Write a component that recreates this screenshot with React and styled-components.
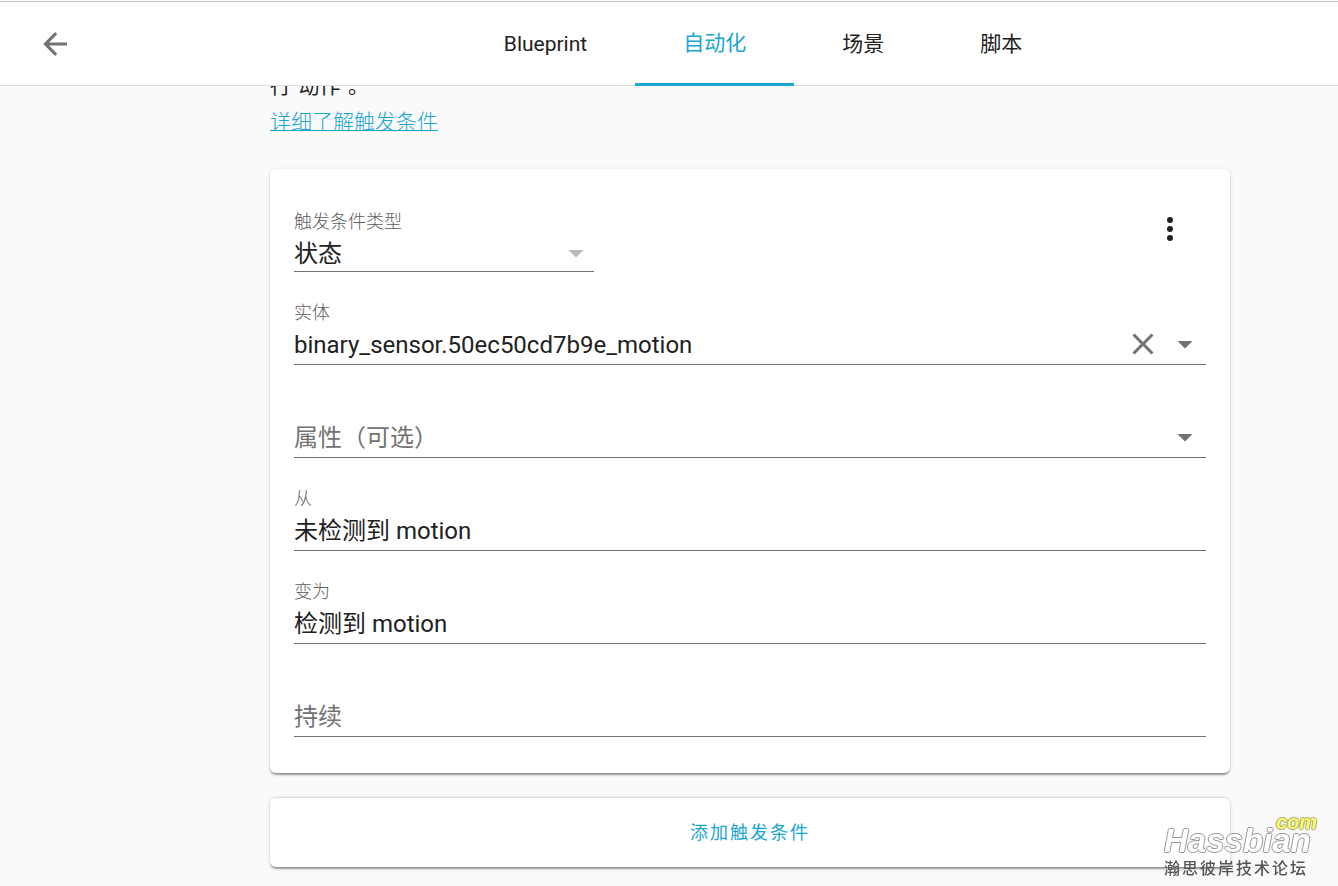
import { useState } from 'react';
import styled, { createGlobalStyle } from 'styled-components';

const ARROW_LEFT = 'M20,11V13H8L13.5,18.5L12.08,19.92L4.16,12L12.08,4.08L13.5,5.5L8,11H20Z';
const CLOSE =
	'M19,6.41L17.59,5L12,10.59L6.41,5L5,6.41L10.59,12L5,17.59L6.41,19L12,13.41L17.59,19L19,17.59L13.41,12L19,6.41Z';
const MENU_DOWN = 'M7,10L12,15L17,10H7Z';
const DOTS =
	'M12,16A2,2 0 0,1 14,18A2,2 0 0,1 12,20A2,2 0 0,1 10,18A2,2 0 0,1 12,16M12,10A2,2 0 0,1 14,12A2,2 0 0,1 12,14A2,2 0 0,1 10,12A2,2 0 0,1 12,10M12,4A2,2 0 0,1 14,6A2,2 0 0,1 12,8A2,2 0 0,1 10,6A2,2 0 0,1 12,4Z';

const tabs = ['Blueprint', '自动化', '场景', '脚本'];

function Icon({ path }) {
	return (
		<Svg viewBox="0 0 24 24" aria-hidden="true">
			<path d={path} />
		</Svg>
	);
}

function TextField({ id, label, value, onChange, placeholder, children }) {
	return (
		<Field>
			<Label htmlFor={id}>{label}</Label>
			<Row>
				<Input
					id={id}
					value={value}
					placeholder={placeholder}
					aria-label={placeholder}
					onChange={(e) => onChange(e.target.value)}
				/>
				{children}
			</Row>
		</Field>
	);
}

export default function App() {
	const [active, setActive] = useState('自动化');
	const [entity, setEntity] = useState('binary_sensor.50ec50cd7b9e_motion');
	const [attribute, setAttribute] = useState('');
	const [from, setFrom] = useState('未检测到 motion');
	const [to, setTo] = useState('检测到 motion');
	const [duration, setDuration] = useState('');

	return (
		<>
			<GlobalStyle />
			<Header>
				<Back>
					<IconButton aria-label="返回">
						<Icon path={ARROW_LEFT} />
					</IconButton>
				</Back>
				<Tabs>
					{tabs.map((tab) => (
						<Tab key={tab} $active={tab === active} onClick={() => setActive(tab)}>
							{tab}
						</Tab>
					))}
				</Tabs>
			</Header>
			<Main>
				<Content>
					<Intro>
						<p>行“动作”。</p>
						<a href="#triggers">详细了解触发条件</a>
					</Intro>
					<Card>
						<CardTop>
							<TypeField>
								<Label htmlFor="type">触发条件类型</Label>
								<Row $short>
									<Select id="type" defaultValue="state">
										<option value="state">状态</option>
									</Select>
									<Muted>
										<Icon path={MENU_DOWN} />
									</Muted>
								</Row>
							</TypeField>
							<MenuButton aria-label="菜单">
								<Icon path={DOTS} />
							</MenuButton>
						</CardTop>
						<TextField id="entity" label="实体" value={entity} onChange={setEntity}>
							<IconButton aria-label="清除" onClick={() => setEntity('')}>
								<Icon path={CLOSE} />
							</IconButton>
							<IconButton aria-label="选择实体">
								<Icon path={MENU_DOWN} />
							</IconButton>
						</TextField>
						<TextField
							id="attribute"
							placeholder="属性（可选）"
							value={attribute}
							onChange={setAttribute}
						>
							<IconButton aria-label="选择属性">
								<Icon path={MENU_DOWN} />
							</IconButton>
						</TextField>
						<TextField id="from" label="从" value={from} onChange={setFrom} />
						<TextField id="to" label="变为" value={to} onChange={setTo} />
						<TextField
							id="duration"
							placeholder="持续"
							value={duration}
							onChange={setDuration}
						/>
					</Card>
					<AddCard>
						<AddButton>添加触发条件</AddButton>
					</AddCard>
				</Content>
			</Main>
			<Watermark>
				<Domain>com</Domain>
				<Brand>Hassbian</Brand>
				<Forum>瀚思彼岸技术论坛</Forum>
			</Watermark>
		</>
	);
}

const GlobalStyle = createGlobalStyle`
	* {
		box-sizing: border-box;
	}
	body {
		margin: 0;
		padding-top: 1px;
		background: #fafafa;
		color: #212121;
		font-family: Roboto, 'Noto Sans CJK SC', sans-serif;
		font-size: 21px;
		line-height: 24px;
		overflow: hidden;
	}
	button, input, select {
		margin: 0;
		padding: 0;
		border: 0;
		background: none;
		color: inherit;
		font: inherit;
		outline: none;
	}
	button {
		cursor: pointer;
	}
`;

const Svg = styled.svg`
	display: block;
	flex: none;
	width: 36px;
	height: 36px;
	fill: currentColor;
`;

const Header = styled.header`
	display: flex;
	height: 85px;
	padding: 0 24px;
	background: #fff;
	border-top: 1px solid #c8c8c8;
	border-bottom: 1px solid #dcdcdc;
`;

const Back = styled.div`
	display: flex;
	flex: 0 0 188px;
	align-items: center;
	padding-left: 10px;
`;

const IconButton = styled.button`
	display: flex;
	flex: none;
	align-items: center;
	justify-content: center;
	width: 42px;
	height: 36px;
	color: #727272;
`;

const Tabs = styled.nav`
	display: flex;
	flex: 1;
	justify-content: center;
	margin-bottom: -1px;
`;

const Tab = styled.button`
	padding: 0 48px;
	white-space: nowrap;
	color: ${(p) => (p.$active ? '#1ba5d3' : 'inherit')};
	border-bottom: ${(p) => (p.$active ? '3px solid #1ba5d3' : '0')};
`;

const Main = styled.main`
	overflow: hidden;
	padding: 0 24px 18px 270px;
`;

const Content = styled.div`
	max-width: 960px;
`;

const Intro = styled.div`
	margin: -18px 0 29px;
	line-height: 36px;
	p {
		margin: 0;
	}
	a {
		display: block;
		color: #1ba5d3;
		font-weight: 300;
		text-decoration: underline;
		text-decoration-thickness: 1px;
	}
`;

const Card = styled.section`
	padding: 24px;
	background: #fff;
	border-radius: 6px;
	box-shadow: 0 3px 2px -1px rgba(0, 0, 0, 0.3), 0 1px 2px 0 rgba(0, 0, 0, 0.14),
		0 1px 5px 0 rgba(0, 0, 0, 0.1);
`;

const CardTop = styled.div`
	display: flex;
	justify-content: space-between;
	align-items: flex-start;
`;

const MenuButton = styled(IconButton)`
	width: 72px;
	height: 72px;
	color: #212121;
`;

const Field = styled.div`
	padding: 12px 0;
`;

const TypeField = styled(Field)`
	width: 300px;
`;

const Label = styled.label`
	display: block;
	height: 30px;
	color: #5e5e5e;
	font-size: 18px;
	font-weight: 300;
	line-height: 34px;
`;

const Row = styled.div`
	display: flex;
	align-items: flex-start;
	height: ${(p) => (p.$short ? 37 : 39)}px;
	border-bottom: 1px solid #727272;
	font-size: 24px;
	line-height: 38px;
`;

const Input = styled.input`
	flex: 1;
	min-width: 0;
	height: 38px;
	&::placeholder {
		color: #727272;
		opacity: 1;
	}
`;

const Select = styled.select`
	flex: 1;
	height: 38px;
	appearance: none;
`;

const Muted = styled.span`
	color: #b9b9b9;
`;

const AddCard = styled(Card)`
	display: flex;
	justify-content: center;
	margin-top: 24px;
	padding: 8px;
	border-top: 1px solid #dcdcdc;
`;

const AddButton = styled.button`
	height: 53px;
	padding: 0 12px;
	color: #1ba5d3;
	font-size: 18px;
	letter-spacing: 2px;
`;

const Watermark = styled.div`
	position: fixed;
	right: 21px;
	bottom: 1px;
	display: flex;
	flex-direction: column;
	width: 153px;
	font-family: 'Liberation Sans', 'Noto Sans CJK SC', sans-serif;
	pointer-events: none;
`;

const Domain = styled.span`
	align-self: flex-end;
	color: #fbf96a;
	font-size: 20px;
	font-style: italic;
	font-weight: 700;
	line-height: 14px;
	text-shadow: 1px 0 1px #a8a878, -1px 0 1px #a8a878, 0 1px 1px #a8a878, 0 -1px 1px #a8a878;
`;

const Brand = styled.span`
	color: #fff;
	font-size: 33px;
	font-style: italic;
	font-weight: 700;
	line-height: 24px;
	text-shadow: 1px 0 0 #999, -1px 0 0 #999, 0 1px 0 #999, 0 -1px 0 #999;
`;

const Forum = styled.span`
	color: #555;
	font-size: 16px;
	font-weight: 500;
	letter-spacing: 2px;
	line-height: 32px;
	white-space: nowrap;
`;
